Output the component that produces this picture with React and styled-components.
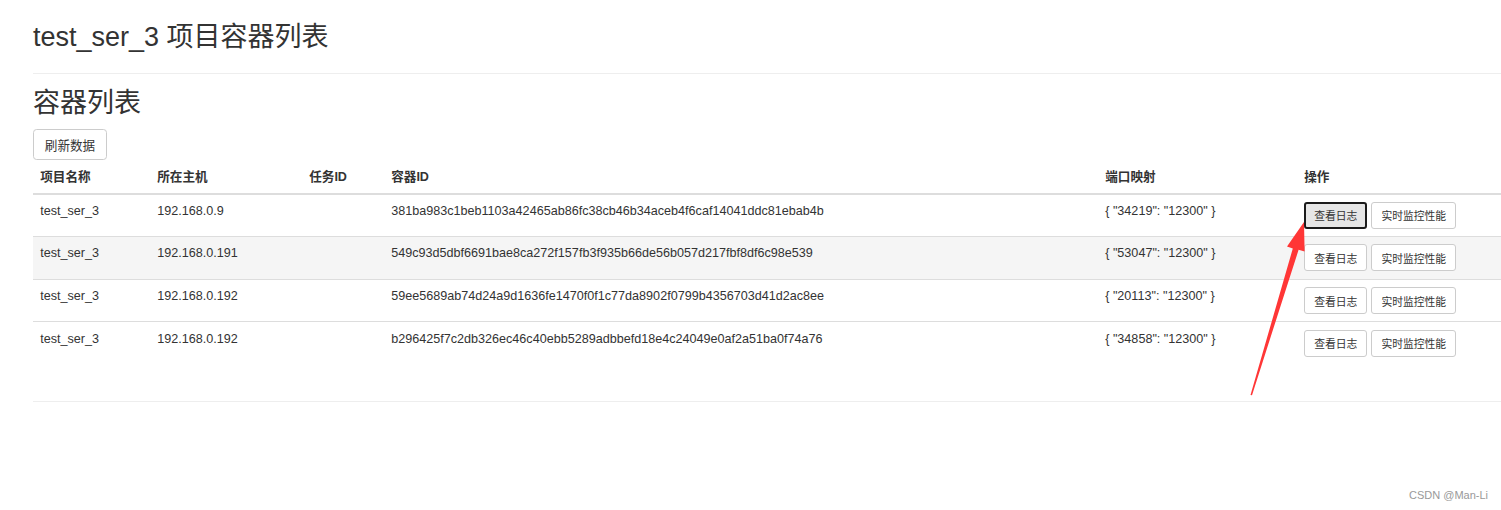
import React from "react";
import styled, { createGlobalStyle } from "styled-components";

const GlobalStyle = createGlobalStyle`
  html, body {
    margin: 0;
    padding: 0;
    background: #fff;
  }
  body {
    font-family: "Liberation Sans", "Noto Sans CJK SC", sans-serif;
    font-size: 12.6px;
    line-height: 1.42857;
    color: #333;
  }
`;

const rows = [
  { name: "test_ser_3", host: "192.168.0.9", task: "", id: "381ba983c1beb1103a42465ab86fc38cb46b34aceb4f6caf14041ddc81ebab4b", ports: '{ "34219": "12300" }' },
  { name: "test_ser_3", host: "192.168.0.191", task: "", id: "549c93d5dbf6691bae8ca272f157fb3f935b66de56b057d217fbf8df6c98e539", ports: '{ "53047": "12300" }' },
  { name: "test_ser_3", host: "192.168.0.192", task: "", id: "59ee5689ab74d24a9d1636fe1470f0f1c77da8902f0799b4356703d41d2ac8ee", ports: '{ "20113": "12300" }' },
  { name: "test_ser_3", host: "192.168.0.192", task: "", id: "b296425f7c2db326ec46c40ebb5289adbbefd18e4c24049e0af2a51ba0f74a76", ports: '{ "34858": "12300" }' },
];

const colWidths = [117, 152, 82, 714, 199];

class App extends React.Component {
  render() {
    return (
      <Page>
        <GlobalStyle />
        <Header>
          <Title>test_ser_3 项目容器列表</Title>
        </Header>
        <SubTitle>容器列表</SubTitle>
        <Button>刷新数据</Button>
        <Table>
          <colgroup>
            {colWidths.map((w, i) => (
              <col key={i} style={{ width: w }} />
            ))}
            <col />
          </colgroup>
          <thead>
            <tr>
              <Th>项目名称</Th>
              <Th>所在主机</Th>
              <Th>任务ID</Th>
              <Th>容器ID</Th>
              <Th>端口映射</Th>
              <Th>操作</Th>
            </tr>
          </thead>
          <tbody>
            {rows.map((r, i) => (
              <Row key={i} $shaded={i === 1} $first={i === 0}>
                <Td>{r.name}</Td>
                <Td>{r.host}</Td>
                <Td>{r.task}</Td>
                <Td>{r.id}</Td>
                <Td>{r.ports}</Td>
                <Td>
                  <Actions>
                    <SmallButton $focused={i === 0}>查看日志</SmallButton>
                    <SmallButton>实时监控性能</SmallButton>
                  </Actions>
                </Td>
              </Row>
            ))}
          </tbody>
        </Table>
        <Rule />
        <Arrow viewBox="0 0 1501 510" width="1501" height="510">
          <polygon
            fill="#ff3636"
            points="1250.5,395 1292.8,248.5 1287,246.6 1304,222 1304.6,251.6 1298.6,249.8 1252,395.3"
          />
        </Arrow>
        <Watermark>CSDN @Man-Li</Watermark>
      </Page>
    );
  }
}

const Page = styled.div`
  position: relative;
  min-height: 510px;
  padding-left: 33px;
  box-sizing: border-box;
  overflow: hidden;
`;

const Header = styled.div`
  padding-top: 23px;
  padding-bottom: 20px;
  border-bottom: 1px solid #eee;
`;

const Title = styled.h1`
  margin: 0;
  font-size: 27px;
  font-weight: 400;
  line-height: 1.1;
  color: #333;
`;

const SubTitle = styled.h2`
  margin: 15px 0 11px;
  font-size: 27px;
  font-weight: 400;
  line-height: 1.1;
  color: #333;
`;

const Button = styled.button`
  display: inline-block;
  box-sizing: border-box;
  height: 31px;
  padding: 0 10.8px;
  font-family: inherit;
  font-size: 12.6px;
  color: #333;
  background: #fff;
  border: 1px solid #ccc;
  border-radius: 3.6px;
  cursor: pointer;
`;

const Table = styled.table`
  width: 1468px;
  border-collapse: collapse;
  border-spacing: 0;
  table-layout: fixed;
`;

const Th = styled.th`
  text-align: left;
  font-weight: bold;
  padding: 7.2px 7.2px 7px;
  line-height: 18px;
  vertical-align: bottom;
  border-bottom: 2px solid #ddd;
`;

const Row = styled.tr`
  background: ${(p) => (p.$shaded ? "#f5f5f5" : "#fff")};
  border-top: ${(p) => (p.$first ? "none" : "1px solid #ddd")};
`;

const Td = styled.td`
  padding: 7.3px 7.2px;
  line-height: 18px;
  vertical-align: top;
  white-space: nowrap;
  overflow: hidden;
`;

const Actions = styled.div`
  display: flex;
  gap: 4px;
`;

const SmallButton = styled.button`
  box-sizing: border-box;
  height: 27px;
  padding: 0 ${(p) => (p.$focused ? "8px" : "9px")};
  font-family: inherit;
  font-size: 10.8px;
  color: #333;
  background: ${(p) => (p.$focused ? "#e6e6e6" : "#fff")};
  border: ${(p) => (p.$focused ? "2px solid #1b1b1b" : "1px solid #ccc")};
  border-radius: 3px;
  cursor: pointer;
`;

const Rule = styled.hr`
  margin: 37px 0 0;
  border: 0;
  border-top: 1px solid #eee;
`;

const Arrow = styled.svg`
  position: absolute;
  left: 0;
  top: 0;
  pointer-events: none;
`;

const Watermark = styled.div`
  position: absolute;
  right: 13px;
  top: 488px;
  font-size: 11px;
  color: #999;
`;

export default App;
